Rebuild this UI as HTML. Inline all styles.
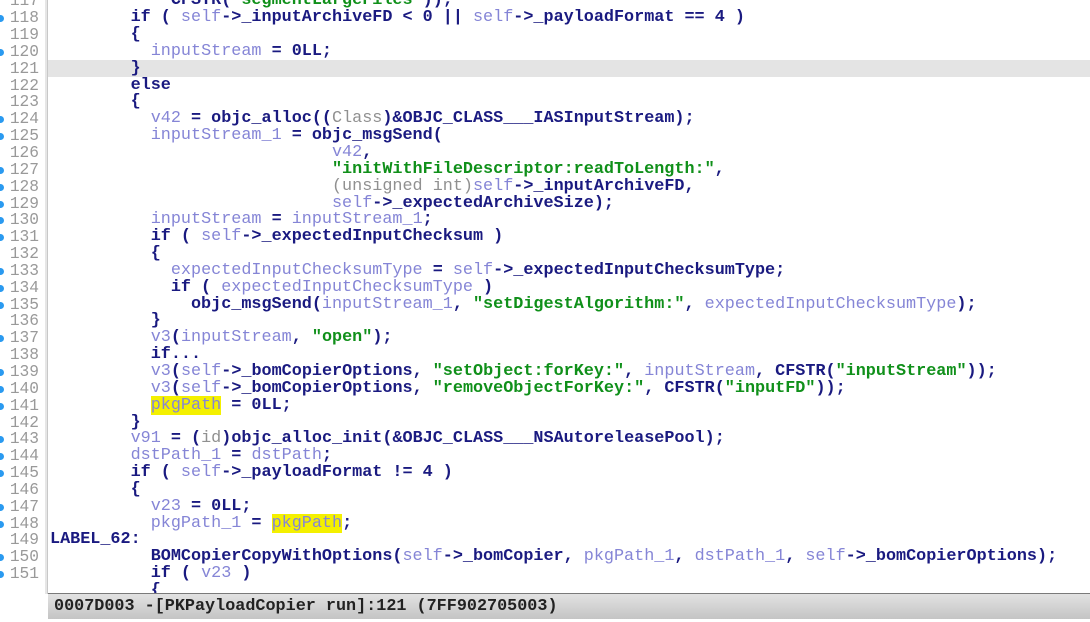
<!DOCTYPE html>
<html><head><meta charset="utf-8"><style>
html,body{margin:0;padding:0;background:#fff;width:1090px;height:622px;overflow:hidden;position:relative}
body{font-family:"Liberation Mono",monospace;font-size:16.8px}
.gut{position:absolute;left:0;top:0;width:45px;height:622px;background:#fff}
.gl{position:absolute;left:45px;top:0;width:2px;height:594px;background:#e6e6e6}
.gl2{position:absolute;left:47px;top:0;width:1px;height:594px;background:#c8c8c8}
.hl{position:absolute;left:48px;right:0;top:60px;height:17px;background:#e4e4e4}
.lines{position:absolute;left:0;top:-6.6px}
.r{height:16.85px;line-height:16.85px;white-space:pre;position:relative}
.num{position:absolute;left:0;width:39px;text-align:right;color:#999;font-size:16.2px}
.code{position:absolute;left:50px;color:#1a1a80;font-weight:bold}
.v{color:#8585d6;font-weight:normal}
.s{color:#10901a;font-weight:bold}
.g{color:#909090;font-weight:normal}
.y{background:#f4f000}
.dot{position:absolute;left:-3px;top:5px;width:7px;height:7px;border-radius:50%;background:#2a9af0}
.st{position:absolute;left:48px;right:0;top:593px;height:25px;border-top:1px solid #7a7a7a;background:linear-gradient(#e2e2e2,#c4c4c4);color:#222;font-weight:bold;line-height:25px;padding-left:6px;white-space:pre}
</style></head><body>
<div class="gut"></div><div class="gl"></div><div class="gl2"></div>
<div class="hl"></div>
<div class="lines">
<div class="r"><span class="num">117</span><span class="code">            CFSTR(<span class="s">"segmentLargeFiles"</span>));</span></div>
<div class="r"><i class="dot"></i><span class="num">118</span><span class="code">        if ( <span class="v">self</span>->_inputArchiveFD &lt; 0 || <span class="v">self</span>->_payloadFormat == 4 )</span></div>
<div class="r"><span class="num">119</span><span class="code">        {</span></div>
<div class="r"><i class="dot"></i><span class="num">120</span><span class="code">          <span class="v">inputStream</span> = 0LL;</span></div>
<div class="r"><span class="num">121</span><span class="code">        }</span></div>
<div class="r"><span class="num">122</span><span class="code">        else</span></div>
<div class="r"><span class="num">123</span><span class="code">        {</span></div>
<div class="r"><i class="dot"></i><span class="num">124</span><span class="code">          <span class="v">v42</span> = objc_alloc((<span class="g">Class</span>)&amp;OBJC_CLASS___IASInputStream);</span></div>
<div class="r"><i class="dot"></i><span class="num">125</span><span class="code">          <span class="v">inputStream_1</span> = objc_msgSend(</span></div>
<div class="r"><span class="num">126</span><span class="code">                            <span class="v">v42</span>,</span></div>
<div class="r"><i class="dot"></i><span class="num">127</span><span class="code">                            <span class="s">"initWithFileDescriptor:readToLength:"</span>,</span></div>
<div class="r"><i class="dot"></i><span class="num">128</span><span class="code">                            <span class="g">(unsigned int)</span><span class="v">self</span>->_inputArchiveFD,</span></div>
<div class="r"><i class="dot"></i><span class="num">129</span><span class="code">                            <span class="v">self</span>->_expectedArchiveSize);</span></div>
<div class="r"><i class="dot"></i><span class="num">130</span><span class="code">          <span class="v">inputStream</span> = <span class="v">inputStream_1</span>;</span></div>
<div class="r"><i class="dot"></i><span class="num">131</span><span class="code">          if ( <span class="v">self</span>->_expectedInputChecksum )</span></div>
<div class="r"><span class="num">132</span><span class="code">          {</span></div>
<div class="r"><i class="dot"></i><span class="num">133</span><span class="code">            <span class="v">expectedInputChecksumType</span> = <span class="v">self</span>->_expectedInputChecksumType;</span></div>
<div class="r"><i class="dot"></i><span class="num">134</span><span class="code">            if ( <span class="v">expectedInputChecksumType</span> )</span></div>
<div class="r"><i class="dot"></i><span class="num">135</span><span class="code">              objc_msgSend(<span class="v">inputStream_1</span>, <span class="s">"setDigestAlgorithm:"</span>, <span class="v">expectedInputChecksumType</span>);</span></div>
<div class="r"><span class="num">136</span><span class="code">          }</span></div>
<div class="r"><i class="dot"></i><span class="num">137</span><span class="code">          <span class="v">v3</span>(<span class="v">inputStream</span>, <span class="s">"open"</span>);</span></div>
<div class="r"><span class="num">138</span><span class="code">          if...</span></div>
<div class="r"><i class="dot"></i><span class="num">139</span><span class="code">          <span class="v">v3</span>(<span class="v">self</span>->_bomCopierOptions, <span class="s">"setObject:forKey:"</span>, <span class="v">inputStream</span>, CFSTR(<span class="s">"inputStream"</span>));</span></div>
<div class="r"><i class="dot"></i><span class="num">140</span><span class="code">          <span class="v">v3</span>(<span class="v">self</span>->_bomCopierOptions, <span class="s">"removeObjectForKey:"</span>, CFSTR(<span class="s">"inputFD"</span>));</span></div>
<div class="r"><i class="dot"></i><span class="num">141</span><span class="code">          <span class="v y">pkgPath</span> = 0LL;</span></div>
<div class="r"><span class="num">142</span><span class="code">        }</span></div>
<div class="r"><i class="dot"></i><span class="num">143</span><span class="code">        <span class="v">v91</span> = (<span class="g">id</span>)objc_alloc_init(&amp;OBJC_CLASS___NSAutoreleasePool);</span></div>
<div class="r"><i class="dot"></i><span class="num">144</span><span class="code">        <span class="v">dstPath_1</span> = <span class="v">dstPath</span>;</span></div>
<div class="r"><i class="dot"></i><span class="num">145</span><span class="code">        if ( <span class="v">self</span>->_payloadFormat != 4 )</span></div>
<div class="r"><span class="num">146</span><span class="code">        {</span></div>
<div class="r"><i class="dot"></i><span class="num">147</span><span class="code">          <span class="v">v23</span> = 0LL;</span></div>
<div class="r"><i class="dot"></i><span class="num">148</span><span class="code">          <span class="v">pkgPath_1</span> = <span class="v y">pkgPath</span>;</span></div>
<div class="r"><span class="num">149</span><span class="code">LABEL_62:</span></div>
<div class="r"><i class="dot"></i><span class="num">150</span><span class="code">          BOMCopierCopyWithOptions(<span class="v">self</span>->_bomCopier, <span class="v">pkgPath_1</span>, <span class="v">dstPath_1</span>, <span class="v">self</span>->_bomCopierOptions);</span></div>
<div class="r"><i class="dot"></i><span class="num">151</span><span class="code">          if ( <span class="v">v23</span> )</span></div>
<div class="r"><span class="num"></span><span class="code">          {</span></div>
</div>
<div class="st">0007D003 -[PKPayloadCopier run]:121 (7FF902705003)</div>
</body></html>
